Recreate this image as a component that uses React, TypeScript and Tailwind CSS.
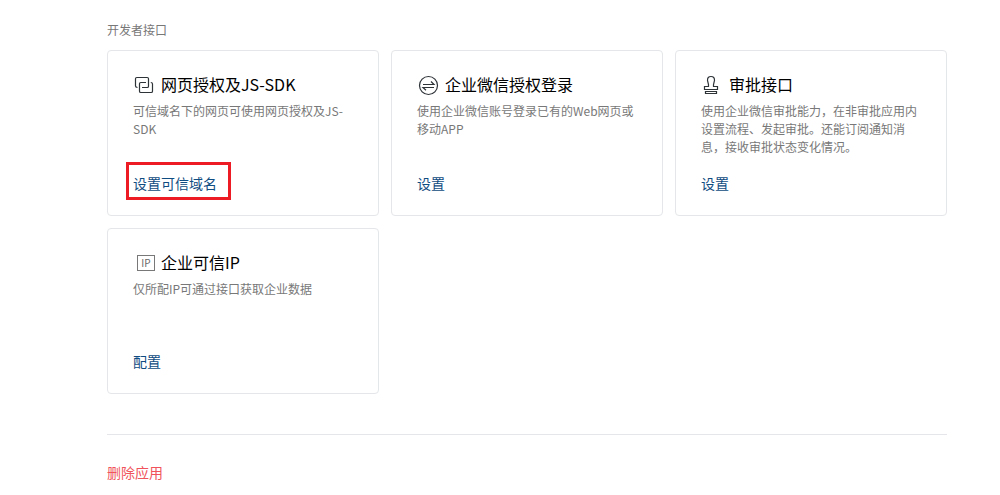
import React from "react";

const LinkIcon = () => (
  <svg
    className="w-6 h-6 shrink-0"
    viewBox="0 0 24 24"
    fill="none"
    stroke="#2e3338"
    strokeWidth="1.2"
    aria-hidden="true"
  >
    <path d="M4.5 14.5Q2.5 14.3 2.5 13V5.8Q2.5 4.5 3.8 4.5H14.2Q15.5 4.5 15.5 5.8V13.2Q15.5 14.5 14.2 14.5H9" />
    <path d="M13 9.5H7.8Q6.5 9.5 6.5 10.8V18.2Q6.5 19.5 7.8 19.5H18.2Q19.5 19.5 19.5 18.2V11Q19.5 9.6 17.8 9.5" />
  </svg>
);

const SwapIcon = () => (
  <svg
    className="w-6 h-6 shrink-0"
    viewBox="0 0 24 24"
    fill="none"
    stroke="#2e3338"
    strokeWidth="1.2"
    aria-hidden="true"
  >
    <circle cx="11.5" cy="12.5" r="9" />
    <path d="M6 11.5H17L14 8.5M17 14.5H6L9 17.3" />
  </svg>
);

const StampIcon = () => (
  <svg
    className="w-6 h-6 shrink-0"
    viewBox="0 0 24 24"
    fill="none"
    stroke="#2e3338"
    strokeWidth="1.2"
    aria-hidden="true"
  >
    <path d="M3.5 16.5V13.5H7.5V11.5L6.5 7.5Q6.3 3.5 10 3.5T13.5 7.5L12.5 11.5V13.5H16.5V16.5Z" />
    <path d="M4.5 18.5H15.5V20.5H4.5Z" />
  </svg>
);

const IpIcon = () => (
  <svg className="w-6 h-6 shrink-0" viewBox="0 0 24 24" aria-hidden="true">
    <rect x="4.5" y="4.5" width="17" height="15" fill="none" stroke="#787878" />
    <text x="13" y="16" textAnchor="middle" fontSize="10" fill="#686868">
      IP
    </text>
  </svg>
);

const cards = [
  {
    icon: <LinkIcon />,
    title: "网页授权及JS-SDK",
    desc: "可信域名下的网页可使用网页授权及JS-SDK",
    action: "设置可信域名",
    marked: true,
  },
  {
    icon: <SwapIcon />,
    title: "企业微信授权登录",
    desc: "使用企业微信账号登录已有的Web网页或移动APP",
    action: "设置",
  },
  {
    icon: <StampIcon />,
    title: "审批接口",
    desc: "使用企业微信审批能力，在非审批应用内设置流程、发起审批。还能订阅通知消息，接收审批状态变化情况。",
    action: "设置",
  },
  {
    icon: <IpIcon />,
    title: "企业可信IP",
    desc: "仅所配IP可通过接口获取企业数据",
    action: "配置",
  },
];

const App = () => {
  return (
    <main
      lang="zh-CN"
      className="bg-white pl-[107px] pr-[53px] pt-5 pb-3 font-['Noto_Sans_CJK_SC',sans-serif]"
    >
      <h2 className="text-xs leading-5 text-[#787878]">开发者接口</h2>
      <div className="grid grid-cols-3 gap-3 mt-[10px]">
        {cards.map((card) => (
          <section
            key={card.title}
            className="border border-[#e4e6e9] rounded px-[25px] py-[22px]"
          >
            <h3 className="flex gap-1 h-6 text-base leading-[22px] text-black">
              {card.icon}
              {card.title}
            </h3>
            <p className="mt-[5px] min-h-[54px] text-xs leading-[18px] text-[#787878]">
              {card.desc}
            </p>
            <div className="flex mt-[17px]">
              <a href="#" className="relative text-sm leading-5 text-[#0f4c81]">
                {card.action}
                {card.marked && (
                  <span className="absolute -left-[7px] -right-[14px] -top-[11px] -bottom-[7px] border-3 border-[#ed1c24]" />
                )}
              </a>
            </div>
          </section>
        ))}
      </div>
      <div className="mt-10 pt-[27px] border-t border-[#e4e6e9] flex">
        <button type="button" className="text-sm leading-5 text-[#f0535b]">
          删除应用
        </button>
      </div>
    </main>
  );
};

export default App;
